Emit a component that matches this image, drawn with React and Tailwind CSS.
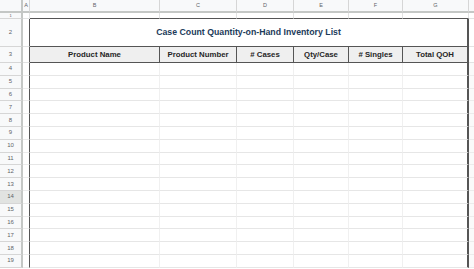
import React from "react";

const colWidths = [7, 130, 77, 57, 55, 54, 66]; // A..G
const colLetters = ["A", "B", "C", "D", "E", "F", "G"];
const headers = ["Product Name", "Product Number", "# Cases", "Qty/Case", "# Singles", "Total QOH"];
const dataRows = [4, 5, 6, 7, 8, 9, 10, 11, 12, 13, 14, 15, 16, 17, 18, 19];

function RowHead({ label, h, selected, small }) {
  return (
    <div
      className={`flex shrink-0 items-center justify-center border-r-2 border-b border-r-[#c4c7c5] border-b-[#d6d6d6] text-[#5f6368] ${
        selected ? "bg-[#e1e3e1]" : "bg-[#f8f9fa]"
      } ${small ? "text-[4px]" : "text-[6px]"} w-[23px]`}
      style={{ height: h }}
    >
      {label}
    </div>
  );
}

export default function App() {
  return (
    <div
      className="w-[474px] h-[269px] overflow-hidden bg-white"
      style={{ fontFamily: '"Liberation Sans", Arial, sans-serif' }}
    >
      {/* column letters */}
      <div className="flex h-[13px]">
        <div className="w-[23px] shrink-0 border-r-2 border-b-2 border-[#c4c7c5] bg-[#f8f9fa]" />
        {colWidths.map((w, i) => (
          <div
            key={i}
            className="flex shrink-0 items-center justify-center border-r border-b-2 border-r-[#d6d6d6] border-b-[#c4c7c5] bg-[#f8f9fa] text-[5.5px] text-[#5f6368]"
            style={{ width: w }}
          >
            {colLetters[i]}
          </div>
        ))}
        <div className="flex-1 border-b-2 border-[#c4c7c5] bg-[#f8f9fa]" />
      </div>

      {/* row 1 */}
      <div className="flex h-[6px]">
        <RowHead label="1" h={6} small />
        <div className="w-[7px] shrink-0 border-r border-b border-[#e2e3e3]" />
        {colWidths.slice(1).map((w, i) => (
          <div
            key={i}
            className="shrink-0 border-r border-b border-r-[#e2e3e3] border-b-[#555]"
            style={{ width: w }}
          />
        ))}
        <div className="flex-1 border-b border-[#e2e3e3]" />
      </div>

      {/* row 2: title */}
      <div className="flex h-[28px]">
        <RowHead label="2" h={28} />
        <div className="w-[7px] shrink-0 border-r border-b border-r-[#555] border-b-[#e2e3e3]" />
        <div className="flex w-[439px] shrink-0 items-center justify-center border-r-2 border-b border-r-[#555] border-b-[#555] text-[8.75px] font-bold text-[#1c3b5a]">
          Case Count Quantity-on-Hand Inventory List
        </div>
        <div className="flex-1 border-b border-[#e2e3e3]" />
      </div>

      {/* row 3: column headings */}
      <div className="flex h-[16px]">
        <RowHead label="3" h={16} />
        <div className="w-[7px] shrink-0 border-r border-b border-r-[#555] border-b-[#e2e3e3]" />
        {headers.map((t, i) => (
          <div
            key={i}
            className={`flex shrink-0 items-center justify-center border-b border-b-[#555] border-r-[#555] bg-[#efefef] text-[7.8px] font-bold text-[#262626] ${
              i === headers.length - 1 ? "border-r-2" : "border-r"
            }`}
            style={{ width: colWidths[i + 1] }}
          >
            {t}
          </div>
        ))}
        <div className="flex-1 border-b border-[#e2e3e3]" />
      </div>

      {/* empty data rows */}
      {dataRows.map((n) => (
        <div key={n} className="flex h-[12.8px]">
          <RowHead label={String(n)} h={12.8} selected={n === 14} />
          <div className="w-[7px] shrink-0 border-r border-b border-r-[#555] border-b-[#ececec]" />
          {colWidths.slice(1).map((w, i) => (
            <div
              key={i}
              className={`shrink-0 border-b border-b-[#e6e6e6] ${
                i === 5 ? "border-r-2 border-r-[#555]" : "border-r border-r-[#f0f0f0]"
              }`}
              style={{ width: w }}
            />
          ))}
          <div className="flex-1 border-b border-[#ececec] bg-[#fafafa]" />
        </div>
      ))}
    </div>
  );
}
